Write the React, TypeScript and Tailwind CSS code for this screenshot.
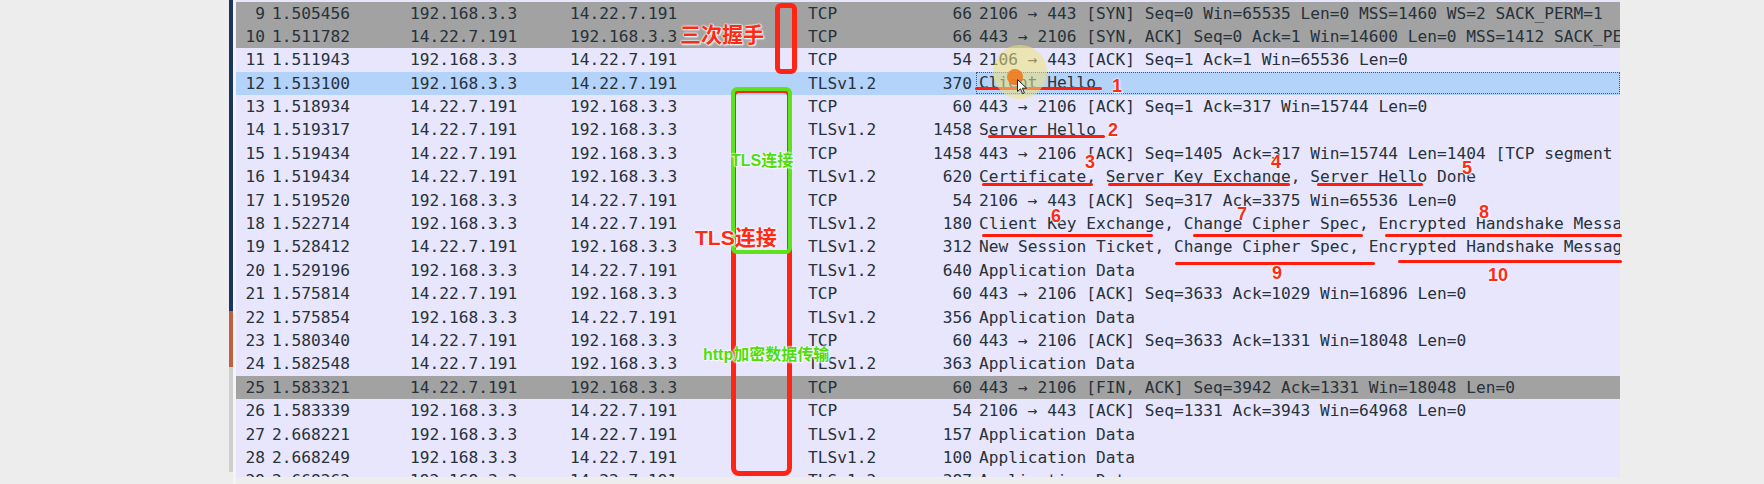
type Packet = {
  no: number;
  time: string;
  src: string;
  dst: string;
  proto: string;
  len: number;
  info: string;
  kind?: 'gray' | 'selected';
};

const A = '192.168.3.3';
const B = '14.22.7.191';

const packets: Packet[] = [
  { no: 9, time: '1.505456', src: A, dst: B, proto: 'TCP', len: 66, info: '2106 → 443 [SYN] Seq=0 Win=65535 Len=0 MSS=1460 WS=2 SACK_PERM=1', kind: 'gray' },
  { no: 10, time: '1.511782', src: B, dst: A, proto: 'TCP', len: 66, info: '443 → 2106 [SYN, ACK] Seq=0 Ack=1 Win=14600 Len=0 MSS=1412 SACK_PERM=1', kind: 'gray' },
  { no: 11, time: '1.511943', src: A, dst: B, proto: 'TCP', len: 54, info: '2106 → 443 [ACK] Seq=1 Ack=1 Win=65536 Len=0' },
  { no: 12, time: '1.513100', src: A, dst: B, proto: 'TLSv1.2', len: 370, info: 'Client Hello', kind: 'selected' },
  { no: 13, time: '1.518934', src: B, dst: A, proto: 'TCP', len: 60, info: '443 → 2106 [ACK] Seq=1 Ack=317 Win=15744 Len=0' },
  { no: 14, time: '1.519317', src: B, dst: A, proto: 'TLSv1.2', len: 1458, info: 'Server Hello' },
  { no: 15, time: '1.519434', src: B, dst: A, proto: 'TCP', len: 1458, info: '443 → 2106 [ACK] Seq=1405 Ack=317 Win=15744 Len=1404 [TCP segment of a reassembled PDU]' },
  { no: 16, time: '1.519434', src: B, dst: A, proto: 'TLSv1.2', len: 620, info: 'Certificate, Server Key Exchange, Server Hello Done' },
  { no: 17, time: '1.519520', src: A, dst: B, proto: 'TCP', len: 54, info: '2106 → 443 [ACK] Seq=317 Ack=3375 Win=65536 Len=0' },
  { no: 18, time: '1.522714', src: A, dst: B, proto: 'TLSv1.2', len: 180, info: 'Client Key Exchange, Change Cipher Spec, Encrypted Handshake Message' },
  { no: 19, time: '1.528412', src: B, dst: A, proto: 'TLSv1.2', len: 312, info: 'New Session Ticket, Change Cipher Spec, Encrypted Handshake Message' },
  { no: 20, time: '1.529196', src: A, dst: B, proto: 'TLSv1.2', len: 640, info: 'Application Data' },
  { no: 21, time: '1.575814', src: B, dst: A, proto: 'TCP', len: 60, info: '443 → 2106 [ACK] Seq=3633 Ack=1029 Win=16896 Len=0' },
  { no: 22, time: '1.575854', src: A, dst: B, proto: 'TLSv1.2', len: 356, info: 'Application Data' },
  { no: 23, time: '1.580340', src: B, dst: A, proto: 'TCP', len: 60, info: '443 → 2106 [ACK] Seq=3633 Ack=1331 Win=18048 Len=0' },
  { no: 24, time: '1.582548', src: B, dst: A, proto: 'TLSv1.2', len: 363, info: 'Application Data' },
  { no: 25, time: '1.583321', src: B, dst: A, proto: 'TCP', len: 60, info: '443 → 2106 [FIN, ACK] Seq=3942 Ack=1331 Win=18048 Len=0', kind: 'gray' },
  { no: 26, time: '1.583339', src: A, dst: B, proto: 'TCP', len: 54, info: '2106 → 443 [ACK] Seq=1331 Ack=3943 Win=64968 Len=0' },
  { no: 27, time: '2.668221', src: A, dst: B, proto: 'TLSv1.2', len: 157, info: 'Application Data' },
  { no: 28, time: '2.668249', src: A, dst: B, proto: 'TLSv1.2', len: 100, info: 'Application Data' },
  { no: 29, time: '2.668262', src: A, dst: B, proto: 'TLSv1.2', len: 387, info: 'Application Data' },
];

function PacketRow({ p }: { p: Packet }) {
  const bg =
    p.kind === 'gray' ? 'bg-[#a2a2a2]' : p.kind === 'selected' ? 'bg-[#b4d3fb]' : 'bg-[#e7e6fd]';
  return (
    <div className={`flex h-[23.4px] shrink-0 items-center whitespace-nowrap leading-[23.4px] ${bg}`}>
      <span className="w-[29px] shrink-0 text-right">{p.no}</span>
      <span className="w-[145px] shrink-0 pl-[7px]">{p.time}</span>
      <span className="w-[160px] shrink-0">{p.src}</span>
      <span className="w-[238px] shrink-0">{p.dst}</span>
      <span className="w-[92px] shrink-0">{p.proto}</span>
      <span className="w-[72px] shrink-0 text-right">{p.len}</span>
      {p.kind === 'selected' ? (
        <span className="ml-[4px] h-[22px] flex-1 border border-dotted border-[#555] pl-[2px] leading-[20px]">
          {p.info}
        </span>
      ) : (
        <span className="pl-[7px]">{p.info}</span>
      )}
    </div>
  );
}

const outline =
  "font-['Liberation_Sans','Noto_Sans_CJK_SC',sans-serif] font-bold whitespace-nowrap [text-shadow:0_0_1px_#fff,0_0_2px_#fff,0_0_2px_#fff,1px_1px_2px_#fff]";

const marks = [
  { n: '1', cls: 'left-[1117px] top-[86px]' },
  { n: '2', cls: 'left-[1113px] top-[130px]' },
  { n: '3', cls: 'left-[1090px] top-[162px]' },
  { n: '4', cls: 'left-[1276px] top-[162px]' },
  { n: '5', cls: 'left-[1467px] top-[168px]' },
  { n: '6', cls: 'left-[1056px] top-[216px]' },
  { n: '7', cls: 'left-[1242px] top-[214px]' },
  { n: '8', cls: 'left-[1484px] top-[212px]' },
  { n: '9', cls: 'left-[1277px] top-[273px]' },
  { n: '10', cls: 'left-[1498px] top-[275px]' },
];

// underline strokes drawn under the handshake messages
const lines = [
  'left-[975px] top-[87px] w-[127px]',
  'left-[988px] top-[135px] w-[117px]',
  'left-[982px] top-[183px] w-[111px]',
  'left-[1108px] top-[183px] w-[182px]',
  'left-[1317px] top-[183px] w-[106px]',
  'left-[982px] top-[234px] w-[171px]',
  'left-[1193px] top-[234px] w-[170px]',
  'left-[1385px] top-[234px] w-[237px]',
  'left-[1175px] top-[262px] w-[200px]',
  'left-[1398px] top-[260px] w-[224px]',
];

function Annotations() {
  return (
    <>
      {/* handshake box */}
      <div className="absolute left-[775px] top-[3px] h-[71px] w-[22px] rounded-md border-[5px] border-[#ff2414]" />
      <div className={`absolute left-[680px] top-[22px] text-[21px] leading-[26px] text-[#ff2a14] ${outline}`}>三次握手</div>

      {/* data transfer box, with TLS box on top */}
      <div className="absolute left-[731px] top-[88px] h-[388px] w-[61px] rounded-lg border-[5px] border-[#ff2414]" />
      <div className="absolute left-[731px] top-[87px] h-[167px] w-[61px] rounded-md border-[4px] border-[#5fe21c]" />
      <div className={`absolute left-[731px] top-[151px] text-[16px] leading-[20px] text-[#4fdc0c] ${outline}`}>TLS连接</div>
      <div className={`absolute left-[695px] top-[225px] text-[21px] leading-[26px] text-[#ff2a14] ${outline}`}>TLS连接</div>
      <div className={`absolute left-[703px] top-[345px] text-[16px] leading-[20px] text-[#4fdc0c] ${outline}`}>http加密数据传输</div>

      {lines.map((c) => (
        <div key={c} className={`absolute h-[3px] rounded-full bg-[#ff1c0c] ${c}`} />
      ))}
      {marks.map((m) => (
        <div
          key={m.n}
          className={`absolute -translate-x-1/2 -translate-y-1/2 text-[18px] leading-[20px] text-[#ff2a14] ${outline} ${m.cls}`}
        >
          {m.n}
        </div>
      ))}

      {/* mouse cursor with click highlight */}
      <div className="absolute left-[993px] top-[45px] h-[54px] w-[54px] rounded-full bg-[#efe27a]/55" />
      <div className="absolute left-[1007px] top-[69px] h-[16px] w-[16px] rounded-full bg-[#f0791c]/90" />
      <svg className="absolute left-[1017px] top-[79px]" width="11" height="16" viewBox="0 0 11 16">
        <path d="M0.5 0.5 L0.5 12.5 L3.5 9.8 L5.6 14.6 L7.4 13.8 L5.4 9.2 L9.5 9.2 Z" fill="#fff" stroke="#222" strokeWidth="1" />
      </svg>
    </>
  );
}

export default function App() {
  return (
    <div className="relative flex h-[484px] w-[1764px] overflow-hidden bg-[#ededed]">
      <div className="w-[229px] shrink-0" />
      <div className="flex h-[472px] w-[4px] shrink-0 flex-col">
        <div className="h-[311px] bg-[#1c3460]" />
        <div className="h-[56px] bg-[#c0603e]" />
        <div className="flex-1 bg-[#cfcfcf]" />
      </div>
      <div className="w-[3px] shrink-0 bg-[#f4f4f4]" />
      <div className="flex h-[477px] w-[1384px] shrink-0 flex-col overflow-hidden bg-[#e7e6fd] pt-[1.5px] font-['DejaVu_Sans_Mono',monospace] text-[16.2px] text-[#27323a]">
        {packets.map((p) => (
          <PacketRow key={p.no} p={p} />
        ))}
      </div>
      <Annotations />
    </div>
  );
}
